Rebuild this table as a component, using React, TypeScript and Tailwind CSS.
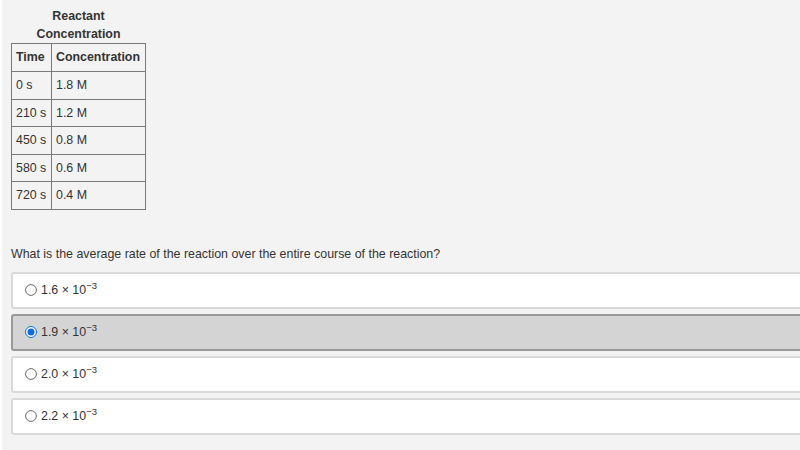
import React from "react"

const ROWS = [
  { time: "0 s", conc: "1.8 M" },
  { time: "210 s", conc: "1.2 M" },
  { time: "450 s", conc: "0.8 M" },
  { time: "580 s", conc: "0.6 M" },
  { time: "720 s", conc: "0.4 M" },
]

const OPTIONS = [
  { base: "1.6", selected: false },
  { base: "1.9", selected: true },
  { base: "2.0", selected: false },
  { base: "2.2", selected: false },
]

function Radio({ checked }: { checked: boolean }) {
  return (
    <svg width="12" height="12" viewBox="0 0 12 12" className="shrink-0">
      {checked ? (
        <>
          <circle cx="6" cy="6" r="5.5" fill="#ffffff" stroke="#0b6cde" strokeWidth="1" />
          <circle cx="6" cy="6" r="3.5" fill="#0b6cde" />
        </>
      ) : (
        <circle cx="6" cy="6" r="5.4" fill="#ffffff" stroke="#6b6b6b" strokeWidth="1" />
      )}
    </svg>
  )
}

export default function App() {
  return (
    <div
      className="h-[450px] w-[800px] overflow-hidden border-l-2 border-white bg-[#f3f3f3] text-[12.4px] text-[#333]"
      style={{ fontFamily: '"Liberation Sans", Arial, sans-serif' }}
    >
      <div className="pl-[9px] pt-[7px]">
        <table className="w-[135px] table-fixed border-collapse">
          <caption className="text-center font-bold leading-[18px]">
            Reactant
            <br />
            Concentration
          </caption>
          <thead>
            <tr className="h-[28px]">
              <th className="w-[40px] border border-[#7a7a7a] px-[4px] text-left font-bold">Time</th>
              <th className="border border-[#7a7a7a] px-[4px] text-left font-bold">Concentration</th>
            </tr>
          </thead>
          <tbody>
            {ROWS.map((r) => (
              <tr key={r.time} className="h-[27.6px]">
                <td className="border border-[#7a7a7a] px-[4px]">{r.time}</td>
                <td className="border border-[#7a7a7a] px-[4px]">{r.conc}</td>
              </tr>
            ))}
          </tbody>
        </table>

        <p className="mt-[36px] leading-[16px]">
          What is the average rate of the reaction over the entire course of the reaction?
        </p>

        <div className="mt-[10px] flex w-[810px] flex-col gap-[5px]">
          {OPTIONS.map((o) => (
            <div
              key={o.base}
              className={`flex h-[37px] items-center gap-[4px] rounded-[3px] border-2 pl-[12px] ${
                o.selected ? "border-[#999] bg-[#d4d4d4]" : "border-[#d9d9d9] bg-white"
              }`}
            >
              <Radio checked={o.selected} />
              <span>
                {o.base} × 10<sup className="text-[9.5px]">−3</sup>
              </span>
            </div>
          ))}
        </div>
      </div>
    </div>
  )
}
